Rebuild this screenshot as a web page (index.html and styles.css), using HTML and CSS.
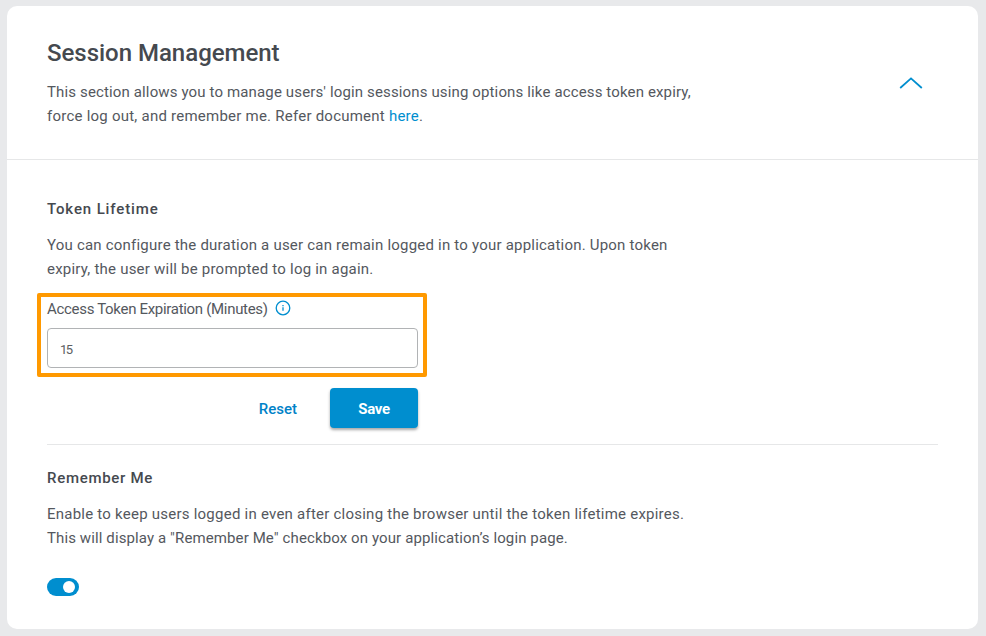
FILE: index.html
```html
<!DOCTYPE html>
<html lang="en">
<head>
<meta charset="utf-8">
<title>Session Management</title>
<link rel="stylesheet" href="styles.css">
</head>
<body>
<main class="card">
  <header class="card-header">
    <div class="intro">
      <h1><span>Session Management</span></h1>
      <p class="copy"><span class="line intro-a">This section allows you to manage users' login sessions using options like access token expiry,</span><span class="line intro-b">force log out, and remember me. Refer document <a href="#">here</a>.</span></p>
    </div>
    <svg class="chevron" width="24" height="14" viewBox="0 0 24 14"><path d="M1.2 12 12 2.4 22.8 12"/></svg>
  </header>
  <section class="token">
    <h2><span class="token-title">Token Lifetime</span></h2>
    <p class="copy"><span class="line token-a">You can configure the duration a user can remain logged in to your application. Upon token</span><span class="line token-b">expiry, the user will be prompted to log in again.</span></p>
    <div class="highlight">
      <div class="label-row">
        <label for="expiry">Access Token Expiration (Minutes)</label>
        <svg class="info" width="16" height="16" viewBox="0 0 16 16"><circle cx="8" cy="8" r="6.8"/><path d="M8 7.2v3.6M8 5v1.2"/></svg>
      </div>
      <input id="expiry" type="text" value="15">
    </div>
    <div class="actions">
      <button class="reset" type="button">Reset</button>
      <button class="save" type="button">Save</button>
    </div>
  </section>
  <section class="remember">
    <h2><span class="remember-title">Remember Me</span></h2>
    <p class="copy"><span class="line remember-a">Enable to keep users logged in even after closing the browser until the token lifetime expires.</span><span class="line remember-b">This will display a "Remember Me" checkbox on your application’s login page.</span></p>
    <div class="toggle"><span class="knob"></span></div>
  </section>
</main>
</body>
</html>
```
FILE: styles.css
```css
* { box-sizing: border-box; }
body {
  margin: 0;
  height: 636px;
  padding: 6px 8px 7px 7px;
  background: #e8e9eb;
  color: #45494f;
  font-family: Roboto, "Liberation Sans", sans-serif;
  overflow: hidden;
}
.card { height: 623px; background: #fff; border-radius: 10px; }
.card-header {
  height: 154px;
  padding: 31px 55px 0 40px;
  display: flex;
  justify-content: space-between;
  border-bottom: 1px solid #e6e7e8;
}
h1 { margin: 0; font-size: 24px; line-height: 32px; font-weight: 500; letter-spacing: -0.02px; white-space: nowrap; }
h2 { margin: 0; font-size: 15px; line-height: 24px; font-weight: 500; letter-spacing: 0.8px; }
.copy { margin: 11px 0 0; color: #54585e; font-size: 15px; line-height: 24px; white-space: nowrap; }
.line { display: block; width: max-content; }
.intro-a { letter-spacing: 0.138px; }
.intro-b { letter-spacing: 0.235px; }
.token-title { letter-spacing: 0.87px; }
.token-a { letter-spacing: 0.21px; }
.token-b { letter-spacing: 0.22px; }
.remember-title { letter-spacing: 0.7px; }
.remember-a { letter-spacing: 0.235px; }
.remember-b { letter-spacing: 0.11px; }
a { color: #008ecf; text-decoration: none; }
.chevron { margin-top: 39px; fill: none; stroke: #008ecf; stroke-width: 1.8; }
.token { margin: 0 40px; padding-top: 37px; height: 285px; border-bottom: 1px solid #e6e7e8; }
.token .copy, .remember .copy { margin-top: 12px; }
.highlight {
  width: 390px;
  height: 84px;
  margin: 12px 0 0 -10px;
  padding: 0 5px 5px 6px;
  border: 4px solid #ff9900;
  border-radius: 2px;
}
.label-row { display: flex; align-items: center; gap: 7.5px; height: 24px; }
label { color: #54585e; font-size: 15px; letter-spacing: -0.31px; white-space: nowrap; }
.info { margin-top: -3px; fill: none; stroke: #008ecf; stroke-width: 1.3; }
input {
  display: block;
  width: 371px;
  height: 40px;
  margin-top: 7px;
  padding: 2px 12px 0;
  border: 1px solid #b1b3b5;
  border-radius: 4px;
  background: #fff;
  color: #5d5e62;
  font: 13px Roboto, sans-serif;
  letter-spacing: -1.5px;
}
.actions { width: 371px; margin-top: 11px; display: flex; justify-content: flex-end; gap: 33px; }
button { border: 0; padding: 0; height: 41px; font: 500 15px Roboto, sans-serif; }
.reset { background: none; color: #0082c8; }
.save {
  width: 88px;
  height: 40px;
  padding: 2px 0 0;
  border-radius: 4px;
  background: #008ecf;
  color: #fff;
  font-weight: 700;
  letter-spacing: -0.3px;
  box-shadow: 0 2px 3px rgba(0, 0, 0, 0.35);
}
.remember { padding: 21px 40px 0; }
.toggle {
  width: 32px;
  height: 18px;
  margin-top: 28px;
  padding: 3px 4px;
  border-radius: 9px;
  background: #008ecf;
  display: flex;
  justify-content: flex-end;
}
.knob { width: 12px; height: 12px; border-radius: 50%; background: #fff; }
```
